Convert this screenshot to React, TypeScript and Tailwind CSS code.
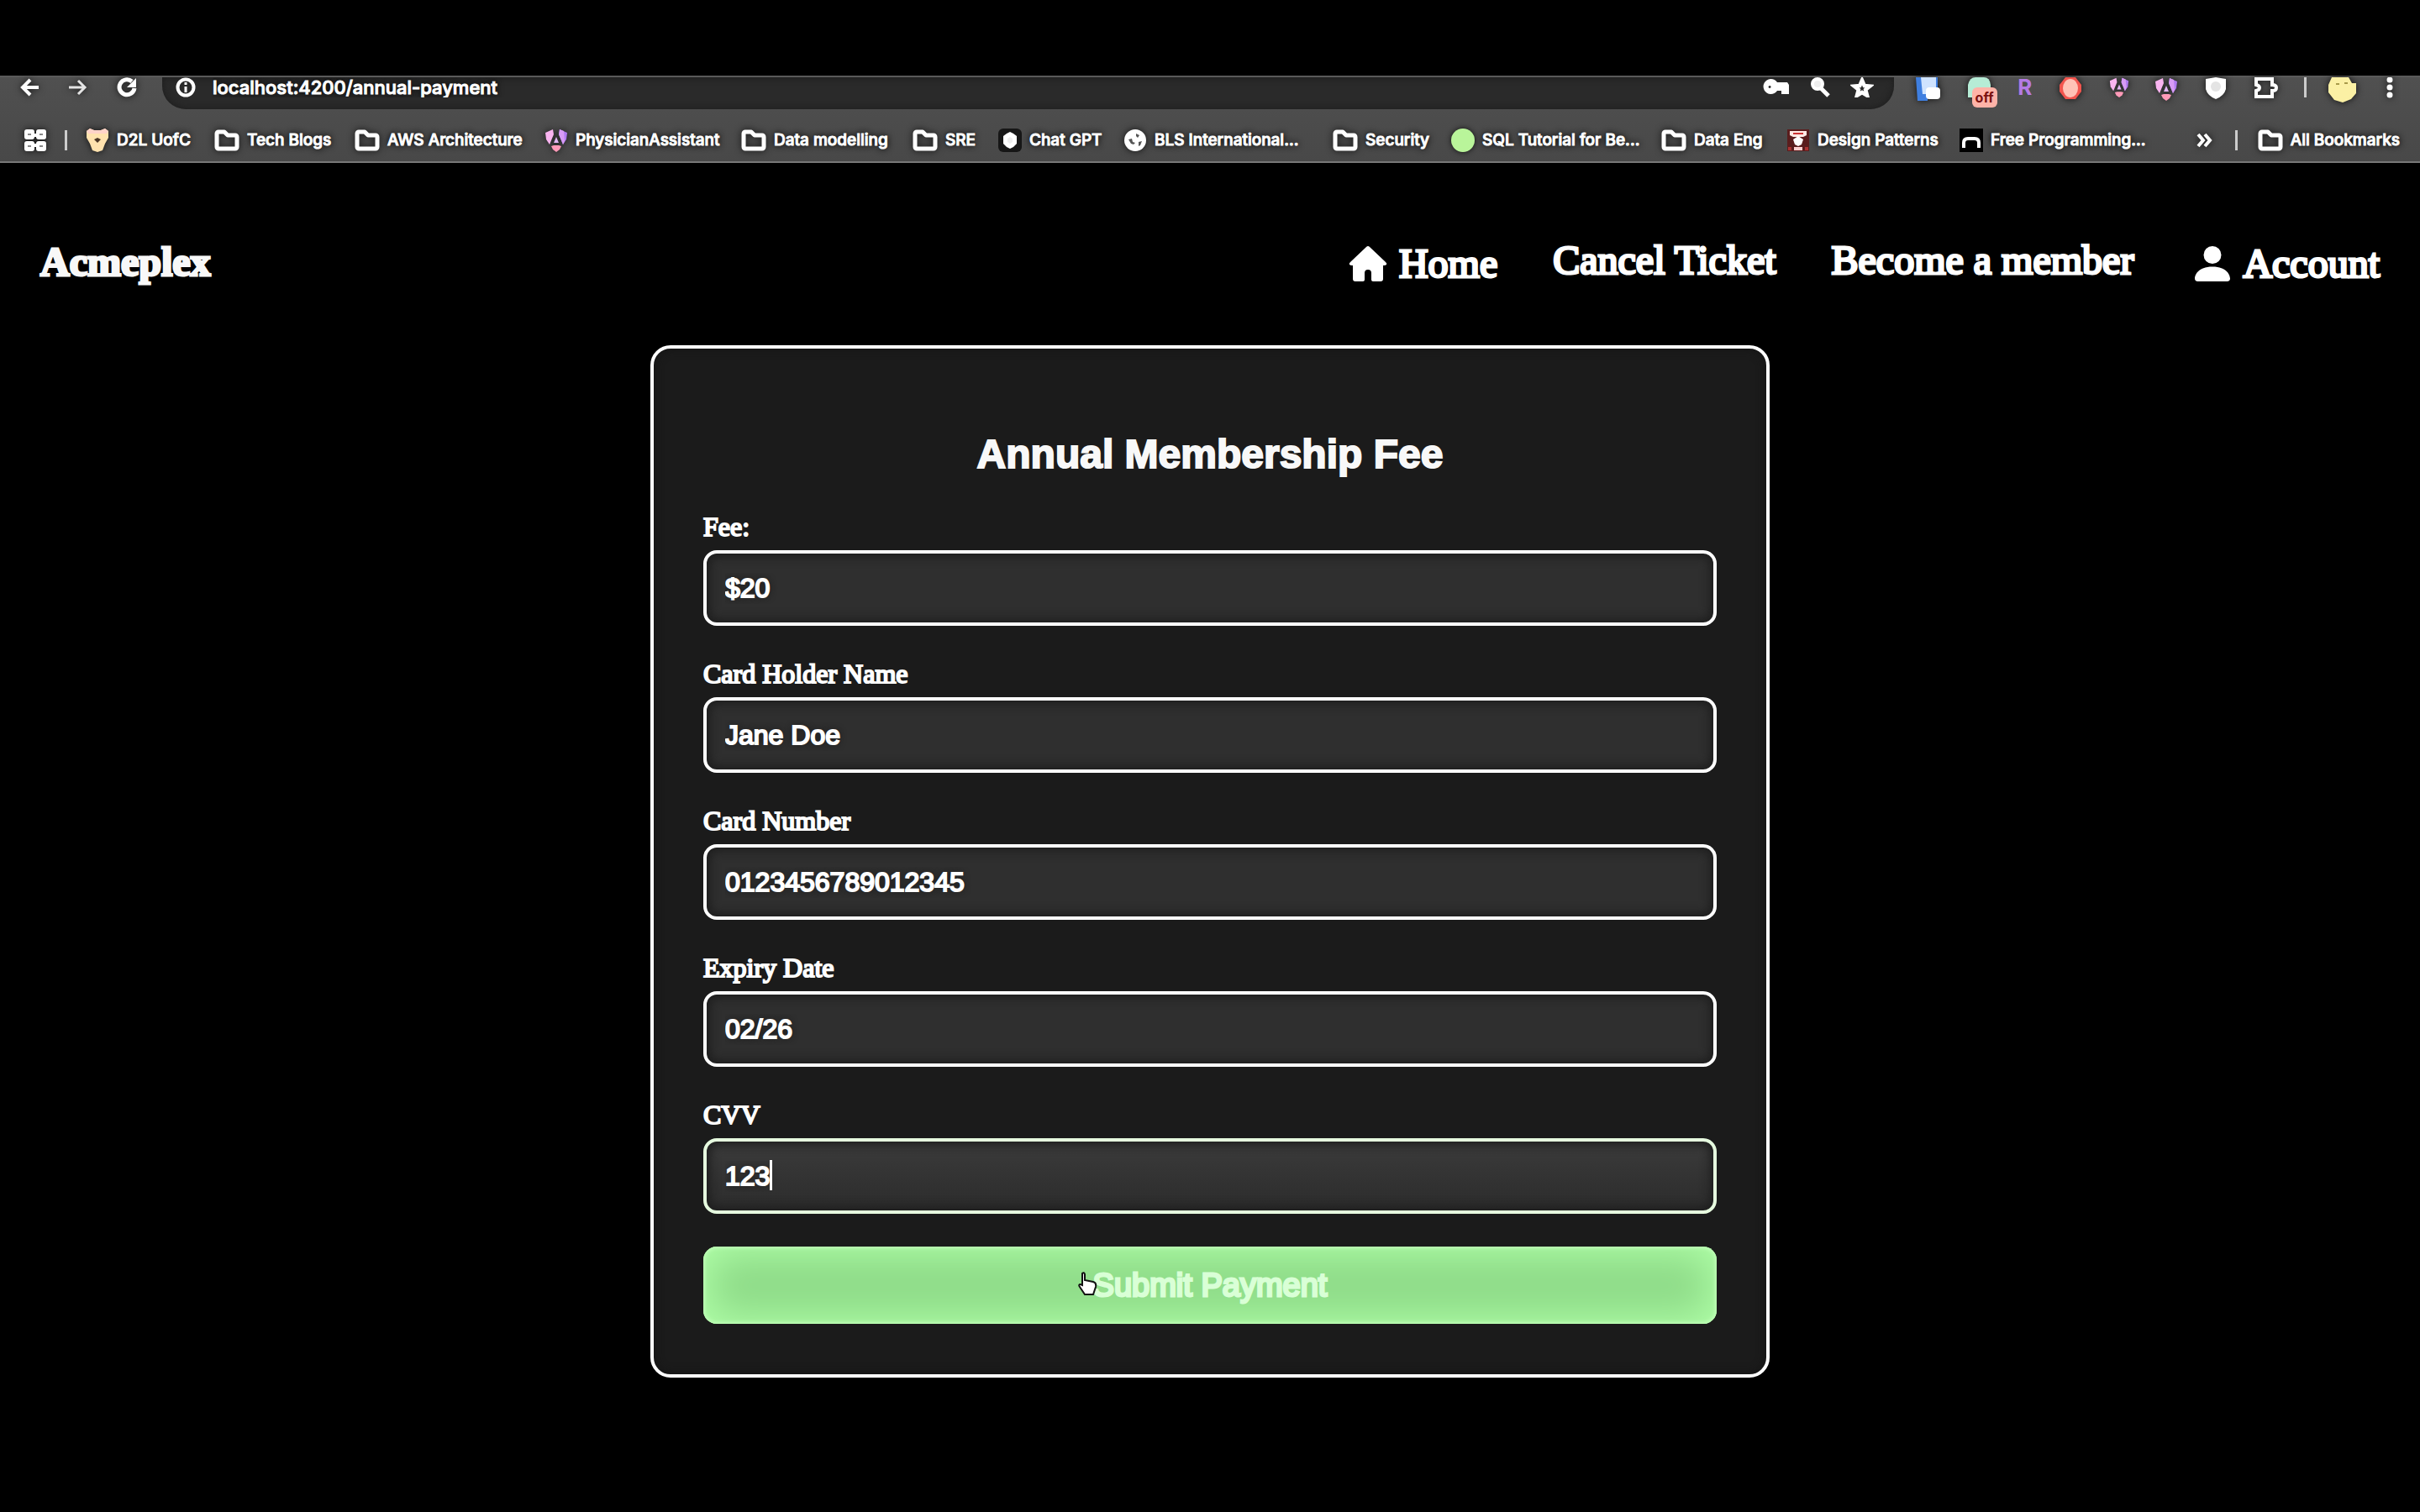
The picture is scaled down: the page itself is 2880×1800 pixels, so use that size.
import React from "react";
import { BsPersonFill } from "react-icons/bs";

const chromeText = "font-[Inter,sans-serif] font-medium text-white [-webkit-text-stroke:1px_#fff] [text-shadow:0_0_6px_#000,0_0_8px_#1a1a1a] whitespace-nowrap";
const glow = "drop-shadow-[0_0_4px_#111]";

function Folder() {
  return (
    <svg viewBox="0 0 30 26" className={`h-[26px] w-[30px] shrink-0 ${glow}`} fill="none" stroke="#fff" strokeWidth="5" strokeLinejoin="round">
      <path d="M3 5a2 2 0 0 1 2-2h7l4 4h9a2 2 0 0 1 2 2v12a2 2 0 0 1-2 2H5a2 2 0 0 1-2-2z" />
    </svg>
  );
}

function Angular({ className }: { className: string }) {
  return (
    <svg viewBox="0 0 28 28" className={`${className} ${glow}`}>
      <path d="M10 1 1 5l1 8 4 6 5-12z" fill="#f9b4f0" />
      <path d="M18 1l9 4-1 8-4 6-5-12z" fill="#b07af0" />
      <path d="M18 1l5 2 1 12-2 4-5-12z" fill="#d79bf5" />
      <path d="M14 10l3 7h-6z" fill="#e3b6f5" />
      <path d="M8 21l3-1h6l3 1-2 4-4 3-4-3z" fill="#ff9ab8" />
    </svg>
  );
}

function Home() {
  return (
    <svg viewBox="0 0 46 44" className="h-11 w-[46px] shrink-0" fill="#fff">
      <path d="M21 2q2-2 4 0l19 18q2 2 1 3t-3 1h-1v16q0 3-3 3h-9q-2 0-2-2V33q0-4-4-4t-4 4v8q0 2-2 2H8q-3 0-3-3V24H4q-2 0-3-1t1-3z" />
    </svg>
  );
}

function Bear() {
  return (
    <svg viewBox="0 0 28 28" className={`size-7 shrink-0 ${glow}`}>
      <path d="M1 3 5 0l5 2h8l5-2 4 3v8l-4 7-3 8-6 2-6-2-3-8-4-7z" fill="#ffe2ae" />
      <path d="M1 3 5 0l5 2h8l5-2 4 3-2 3H3z" fill="#ffd3c9" />
      <path d="M10 13l4-2 4 2-4 4z" fill="#4a3524" />
    </svg>
  );
}

function ChatGpt() {
  return (
    <svg viewBox="0 0 28 28" className="size-7 shrink-0">
      <rect width="28" height="28" rx="6" fill="#161616" />
      <path d="M14 4l4 2 4 3v9l-4 4-4 2-4-2-4-4V9l4-3z" fill="#fff" />
      <path d="M14 10l3 2v4l-3 2-3-2v-4z" fill="#eee" />
    </svg>
  );
}

function Globe() {
  return (
    <svg viewBox="0 0 28 28" className={`size-7 shrink-0 ${glow}`}>
      <circle cx="14" cy="14" r="13" fill="#fff" />
      <path d="M6 13l4-1 1 4 3 1-2 2-3-1zM15 6l4 2-2 3-2-2zM18 16l4-1-2 5-2 1z" fill="#555" />
    </svg>
  );
}

function Medal() {
  return (
    <svg viewBox="0 0 28 28" className="size-7 shrink-0">
      <rect x="1" y="1" width="26" height="26" fill="#5a1d1d" />
      <path d="M4 3h20v5l-4 2H8L4 8z" fill="#ffe9e4" />
      <path d="M8 5h12v2H8z" fill="#c33" />
      <path d="M14 9l6 4-2 6-4 2-4-2-2-6z" fill="#fff" />
      <path d="M9 22h10v4H9z" fill="#ffd0d0" />
      <path d="M2 22h4v4H2zM22 22h4v4h-4z" fill="#a33" />
    </svg>
  );
}

function Arch() {
  return (
    <svg viewBox="0 0 28 28" className="size-7 shrink-0">
      <rect width="28" height="28" fill="#000" />
      <path d="M5 23v-6q0-5 5-5h8q5 0 5 5v6" fill="none" stroke="#fff" strokeWidth="4" />
    </svg>
  );
}

const bookmarks: [React.ReactNode, string, string][] = [
  [<Bear />, "D2L UofC", "w-[153px]"],
  [<Folder />, "Tech Blogs", "w-[167px]"],
  [<Folder />, "AWS Architecture", "w-[226px]"],
  [<Angular className="size-7 shrink-0" />, "PhysicianAssistant", "w-[234px]"],
  [<Folder />, "Data modelling", "w-[204px]"],
  [<Folder />, "SRE", "w-[102px]"],
  [<ChatGpt />, "Chat GPT", "w-[149px]"],
  [<Globe />, "BLS International...", "w-[249px]"],
  [<Folder />, "Security", "w-[141px]"],
  [<span className="size-7 shrink-0 rounded-full bg-[#b9f59a] shadow-[0_0_6px_#111]" />, "SQL Tutorial for Be...", "w-[250px]"],
  [<Folder />, "Data Eng", "w-[149px]"],
  [<Medal />, "Design Patterns", "w-[206px]"],
  [<Arch />, "Free Programming...", "w-[222px]"],
];

function Toolbar() {
  return (
    <div className="flex h-[38px] items-start">
      <div className="flex w-[193px] shrink-0 items-center gap-[34px] pl-[23px]">
        <button aria-label="Back">
          <svg viewBox="0 0 24 24" className={`size-6 ${glow}`} fill="none" stroke="#fff" strokeWidth="4"><path d="M23 12H4M13 3l-9 9 9 9" /></svg>
        </button>
        <button aria-label="Forward">
          <svg viewBox="0 0 24 24" className={`size-6 ${glow}`} fill="none" stroke="#e4e4e4" strokeWidth="3"><path d="M1 12h19M12 4l8 8-8 8" /></svg>
        </button>
        <button aria-label="Reload">
          <svg viewBox="0 0 24 24" className={`size-6 ${glow}`} fill="none" stroke="#fff" strokeWidth="5"><path d="M18 5a9 9 0 1 0 3 8" /><path d="M23 1v11H12z" fill="#fff" stroke="none" /></svg>
        </button>
      </div>
      <div className="flex h-[38px] min-w-0 flex-1 items-start justify-between rounded-b-[28px] bg-[#2a2a2a] pr-6 pl-4 shadow-[inset_0_0_8px_#1c1c1c]">
        <div className="flex h-6 items-center gap-5">
          <svg viewBox="0 0 24 24" className="size-6" fill="none" stroke="#fff" strokeWidth="4"><circle cx="12" cy="12" r="9.500" /><path d="M12 6v3M12 11v7" strokeWidth="3" /></svg>
          <input aria-label="Address" defaultValue="localhost:4200/annual-payment" className={`w-[600px] bg-transparent text-[22px] leading-6 outline-none ${chromeText}`} />
        </div>
        <div className="flex h-6 items-center gap-6">
          <svg viewBox="0 0 32 24" className="h-6 w-8"><path fill="#fff" fillRule="evenodd" d="M9 2a9 9 0 0 1 8 4h12l2 3v11h-9v-4h-5a9 9 0 1 1-8-14zM8 10a1.500 1.500 0 1 0 .1 3A1.500 1.500 0 0 0 8 10z" /></svg>
          <svg viewBox="0 0 24 24" className="size-6" fill="none" stroke="#fff" strokeWidth="4"><circle cx="9" cy="8" r="6" fill="#eee" /><path d="M13 13l9 9" strokeWidth="5" /></svg>
          <svg viewBox="0 0 28 26" className="h-6 w-7" fill="none" stroke="#fff" strokeWidth="5"><path d="M14 4l3 7 7 .5-5.500 4.500 2 7.500L14 19.500 7.500 23.500l2-7.500L4 11.500l7-.5z" /></svg>
        </div>
      </div>
      <div className="flex w-[626px] shrink-0 items-start justify-between pr-8 pl-[26px]">
        <svg viewBox="0 0 30 30" className={`size-[30px] ${glow}`}>
          <path d="M0 0h26v16H14v12H2z" fill="#3f7fe0" /><path d="M6 0h18v20H8z" fill="#cfe3ff" /><rect x="12" y="12" width="17" height="14" rx="4" fill="#fff" />
        </svg>
        <div className="relative">
          <svg viewBox="0 0 30 30" className={`size-[30px] ${glow}`}><path d="M1 24V9Q3 0 10 0h10q7 0 8 9v15z" fill="#b6ecd6" /></svg>
          <span className="absolute top-3 left-1.5 rounded-md bg-[#ffb3a8] px-1 font-[Inter,sans-serif] text-base leading-6 font-bold text-[#7a1010]">off</span>
        </div>
        <span className="font-[Inter,sans-serif] text-[26px] leading-6 font-bold text-[#b57be6]">R</span>
        <svg viewBox="0 0 30 30" className={`size-[30px] ${glow}`}><path d="M9 0h12l7 9v8l-7 9H9l-7-9V9z" fill="#f2554e" /><ellipse cx="15" cy="13" rx="9" ry="11" fill="#ffc2b6" /></svg>
        <Angular className="size-6" />
        <Angular className="size-7" />
        <svg viewBox="0 0 28 28" className={`size-7 ${glow}`}><path d="M2 2 14 0l12 2v12q-2 8-12 12Q4 22 2 14z" fill="#fff" /><circle cx="14" cy="11" r="6" fill="#e4e4e4" /></svg>
        <svg viewBox="0 0 30 28" className={`h-7 w-[30px] ${glow}`} fill="none" stroke="#fff" strokeWidth="4"><path d="M4 2h19v7q5 0 5 3.500T23 16v7H4v-7q4-1 4-3.500T4 9z" /></svg>
        <div className="flex items-start">
          <span className="mr-6 h-6 w-[3px] bg-[#ccc]" />
          <svg viewBox="0 0 36 32" className={`mr-[35px] h-8 w-9 ${glow}`}><path d="M6 0h20l4 7h5v12l-6 7-10 4-10-3-7-9V9z" fill="#fbf0a4" /><path d="M11 7h4v2h-4zM21 6h4v2h-4z" fill="#a89a4a" /></svg>
          <button aria-label="Menu"><svg viewBox="0 0 8 28" className={`h-7 w-2 ${glow}`} fill="#fff"><circle cx="4" cy="3" r="3.500" /><circle cx="4" cy="12" r="3.500" /><circle cx="4" cy="21" r="3.500" /></svg></button>
        </div>
      </div>
    </div>
  );
}

function Bookmarks() {
  return (
    <div className={`flex h-[62px] items-center pt-3 pr-6 pl-[29px] text-[19px] leading-6 ${chromeText}`}>
      <svg viewBox="0 0 26 26" className={`size-[26px] ${glow}`} fill="#fff"><rect x="0" y="0" width="12" height="12" rx="3" /><rect x="14" y="0" width="12" height="12" rx="3" /><rect x="0" y="14" width="12" height="12" rx="3" /><rect x="14" y="14" width="12" height="12" rx="3" /><path d="M4 5h4v2H4zM18 5h4v2h-4zM4 19h4v2H4zM18 19h4v2h-4z" fill="#888" /><path d="M11 5h4v4h-4zM11 17h4v4h-4z" /></svg>
      <span className="mx-[22px] h-6 w-[3px] bg-[#ccc]" />
      {bookmarks.map(([icon, name, width]) => (
        <a href="#" key={name} className={`flex shrink-0 items-center gap-[9px] ${width}`}>
          {icon}
          {name}
        </a>
      ))}
      <button aria-label="More bookmarks" className="ml-auto">
        <svg viewBox="0 0 22 20" className={`h-5 w-[22px] ${glow}`} fill="none" stroke="#fff" strokeWidth="4"><path d="M2 3l6 7-6 7M10 3l6 7-6 7" /></svg>
      </button>
      <span className="mx-6 h-6 w-[3px] bg-[#ccc]" />
      <a href="#" className="flex shrink-0 items-center gap-[9px]"><Folder />All Bookmarks</a>
    </div>
  );
}

const navLink = "flex items-center text-5xl leading-[56px] text-white [-webkit-text-stroke:3px_#fff]";

const fields = [
  { id: "fee", label: "Fee:", value: "$20" },
  { id: "holder", label: "Card Holder Name", value: "Jane Doe" },
  { id: "number", label: "Card Number", value: "0123456789012345" },
  { id: "expiry", label: "Expiry Date", value: "02/26" },
  { id: "cvv", label: "CVV", value: "123" },
];

export default function App() {
  return (
    <div className="min-h-screen bg-black pt-[90px] font-['Liberation_Serif',serif]">
      <header className="border-t-2 border-b-2 border-t-[#5a5a5a] border-b-[#777] bg-linear-to-b from-[#505050] to-[#484848]">
        <Toolbar />
        <Bookmarks />
      </header>

      <nav className="flex items-center justify-between px-12 pt-[88px]">
        <a href="#" className="text-5xl leading-[60px] font-bold text-[#f8f8f8] [-webkit-text-stroke:3px_#f8f8f8]">Acmeplex</a>
        <div className="flex items-start gap-[66px]">
          <a href="#" className={`${navLink} gap-3.5 pt-1`}><Home />Home</a>
          <a href="#" className={navLink}>Cancel Ticket</a>
          <a href="#" className={navLink}>Become a member</a>
          <a href="#" className={`${navLink} gap-2 pt-1`}><BsPersonFill className="size-14" />Account</a>
        </div>
      </nav>

      <main className="mx-auto mt-[69px] w-[1332px] max-w-full rounded-3xl border-4 border-white bg-[#1b1b1b] px-[59px] pt-[98px] pb-[60px] shadow-[inset_0_0_12px_#141414]">
        <form onSubmit={(e) => e.preventDefault()}>
          <h1 className="text-center font-['Liberation_Sans',sans-serif] text-5xl leading-[56px] font-bold text-[#f8f8f8] [-webkit-text-stroke:2px_#f8f8f8]">Annual Membership Fee</h1>
          <div className="mt-10 flex flex-col gap-[39px]">
            {fields.map((f) => (
              <div key={f.id} className="flex flex-col gap-2.5">
                <label htmlFor={f.id} className="text-[32px] leading-9 text-white [-webkit-text-stroke:2px_#fff]">{f.label}</label>
                <div className="relative">
                  <input
                    id={f.id}
                    defaultValue={f.value}
                    className={`block h-[90px] w-full rounded-2xl border-4 px-[22px] font-['Liberation_Sans',sans-serif] text-[32px] text-white outline-none [-webkit-text-stroke:2px_#fff] [text-shadow:0_0_8px_#111] shadow-[inset_0_0_12px_4px_#1e1e1e] ${f.id === "cvv" ? "border-[#e6fadf] bg-linear-to-b from-[#3b3b3b] to-[#2c2c2c]" : "border-white bg-[#2f2f2f]"}`}
                  />
                  {f.id === "cvv" && <span className="absolute top-[26px] left-[79px] h-9 w-[3px] bg-white" />}
                </div>
              </div>
            ))}
          </div>
          <button className="relative mt-[39px] block h-[92px] w-full rounded-2xl bg-[#8edb88] text-center font-['Liberation_Sans',sans-serif] text-[38px] text-[#d9ffd6] [-webkit-text-stroke:3px_#d9ffd6] shadow-[inset_0_0_4px_2px_#c0ffb8,inset_0_0_48px_8px_#b0ffa8]">
            Submit Payment
            <svg viewBox="0 0 26 32" className="absolute top-[29px] left-[445px] h-8 w-[26px]">
              <path d="M6 3q2-2 3 1v7l10 2q4 1 3 6l-3 9H9L3 19q-2-3 1-3l2 1z" fill="#fff" stroke="#111" strokeWidth="2" />
            </svg>
          </button>
        </form>
      </main>
    </div>
  );
}
